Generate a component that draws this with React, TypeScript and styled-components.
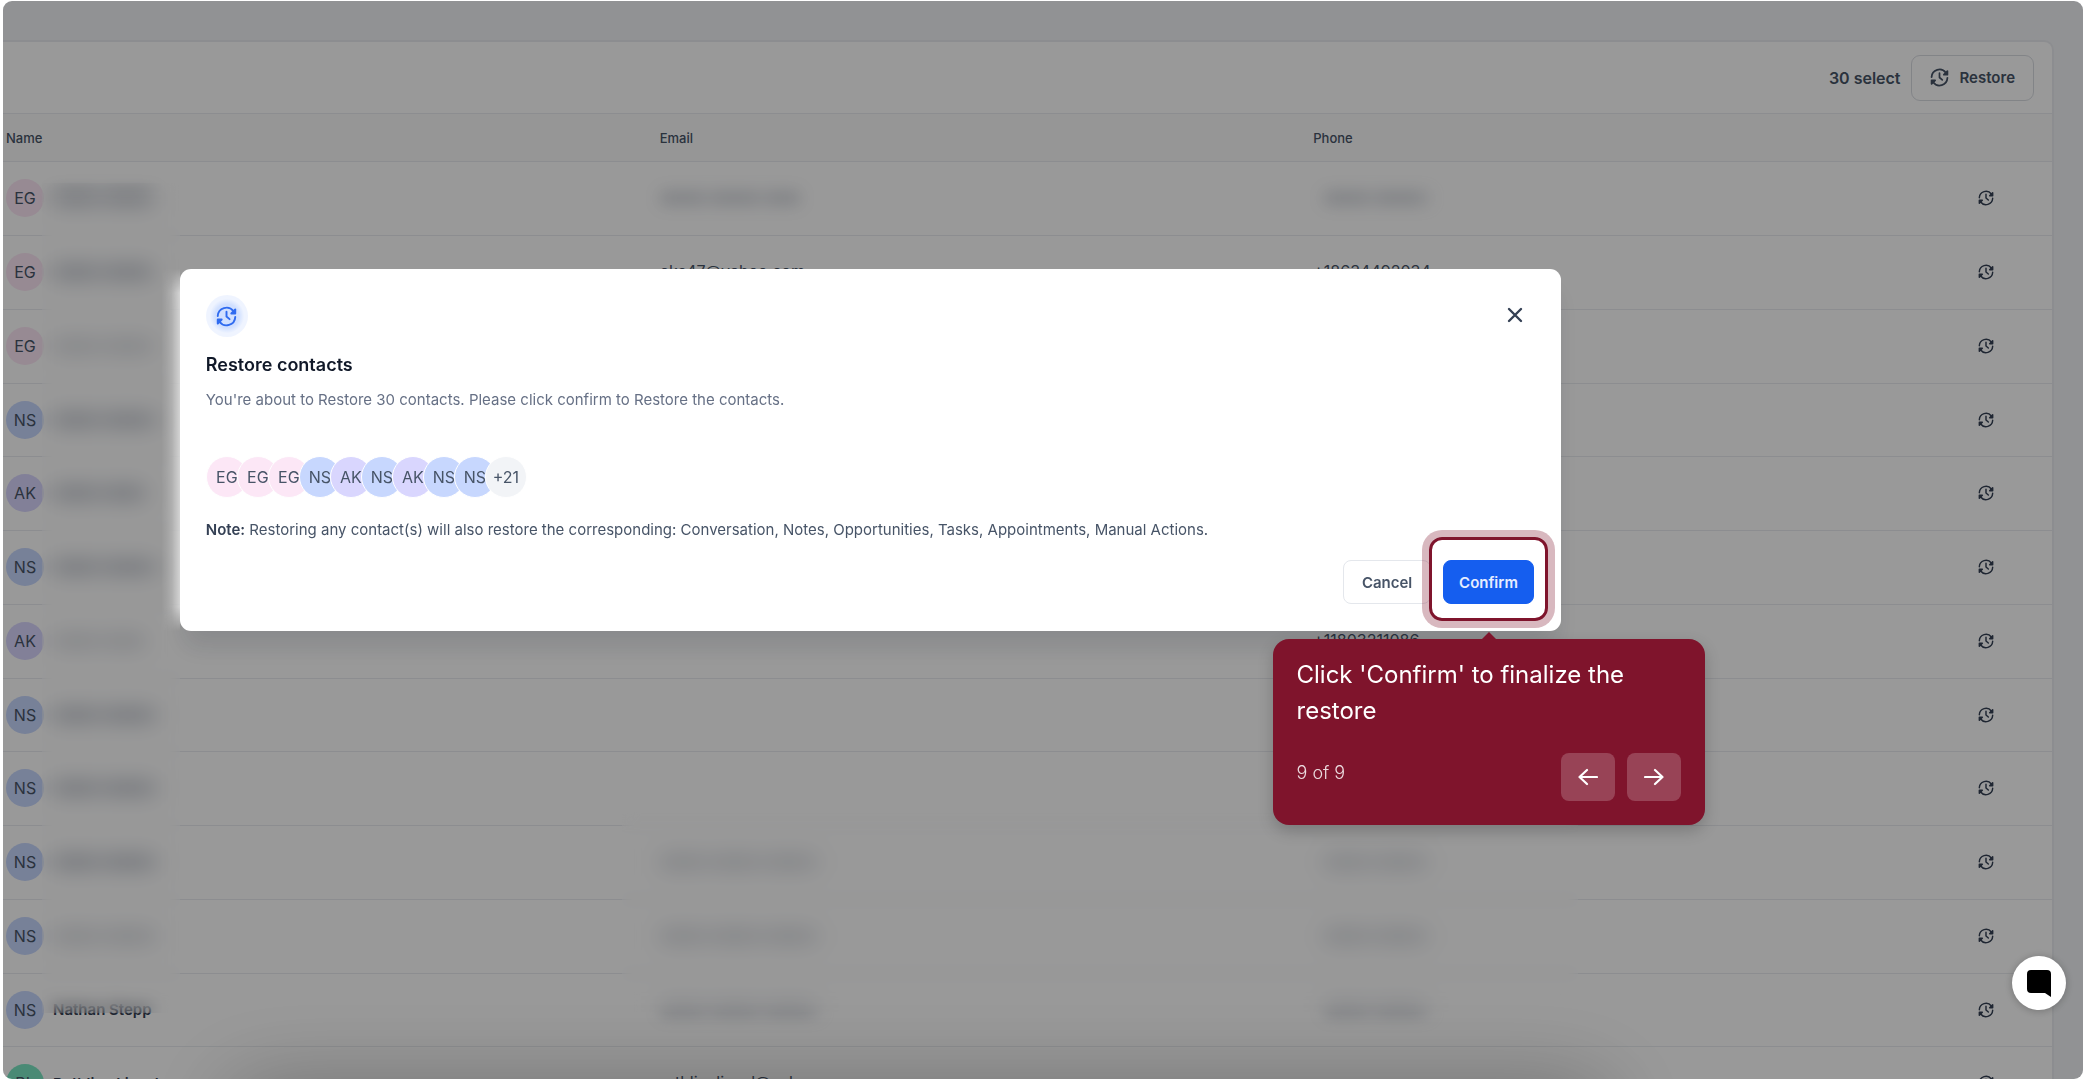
import React from "react";
import styled, { createGlobalStyle } from "styled-components";

const GlobalStyle = createGlobalStyle`
  * { box-sizing: border-box; }
  body {
    margin: 0;
    background: #fff;
    font-family: Inter, "Liberation Sans", sans-serif;
    overflow: hidden;
  }
  button { font: inherit; cursor: pointer; }
`;

const tones = { pink: "#fce7f6", blue: "#c7d7fe", purple: "#d9d6fe", green: "#7ce7c4", gray: "#f2f4f7" };
type Tone = keyof typeof tones;

const Frame = styled.div`
  position: relative;
  height: calc(100vh - 2px);
  margin: 1px 3px;
  padding-top: 41px;
  border-radius: 9px;
  overflow: hidden;
  background: #f2f4f7;
`;

const Card = styled.section`
  position: relative;
  margin-right: 31px;
  background: #fff;
  border-radius: 0 8px 0 0;
  box-shadow: 0 0 0 2px #eaecf0;
`;

const Toolbar = styled.header`
  display: flex;
  align-items: center;
  justify-content: flex-end;
  gap: 10px;
  height: 71px;
  padding-right: 18px;
  color: #475467;
  font-size: 16px;
  font-weight: 600;
`;

const OutlineButton = styled.button`
  display: flex;
  align-items: center;
  gap: 11px;
  height: 46px;
  padding: 0 18px;
  border: 1px solid #d9dce2;
  border-radius: 9px;
  background: transparent;
  color: #475467;
  font-size: 15px;
  font-weight: 600;
`;

const Table = styled.table`
  width: 100%;
  table-layout: fixed;
  border-collapse: collapse;
  color: #475467;
  font-size: 16px;
`;

const Column = styled.col<{ $width?: string }>`
  width: ${(p) => p.$width ?? "auto"};
`;

const HeadCell = styled.th`
  height: 48px;
  padding: 0 3px;
  border: 1px solid #eaecf0;
  border-width: 1px 0;
  background: #fafafa;
  font-size: 13px;
  font-weight: 500;
  text-align: left;
`;

const Row = styled.tr`
  height: 74px;
  border-bottom: 1px solid #eaecf0;
  &:nth-child(4n) { height: 73px; }
`;

const Cell = styled.td<{ $end?: boolean }>`
  padding: 0 ${(p) => (p.$end ? "58px" : "2px")} 4px 3px;
  text-align: ${(p) => (p.$end ? "right" : "left")};
  white-space: nowrap;
`;

const Person = styled.div`
  display: flex;
  align-items: center;
  gap: 9px;
  padding-top: 3px;
  color: #344054;
  font-size: 15px;
  font-weight: 600;
`;

const Avatar = styled.span<{ $tone: Tone }>`
  display: grid;
  place-items: center;
  flex: none;
  width: 38px;
  height: 38px;
  border-radius: 50%;
  background: ${(p) => tones[p.$tone]};
  color: #475467;
  font-size: 16px;
  font-weight: 400;
`;

const Smudge = styled.span<{ $width: number; $faint?: boolean; $indent?: boolean }>`
  display: inline-block;
  width: ${(p) => p.$width}px;
  height: 14px;
  margin-left: ${(p) => (p.$indent ? 11 : 0)}px;
  border-radius: 4px;
  background: repeating-linear-gradient(90deg, #667085 0 42px, #a4abb9 42px 54px);
  filter: blur(8px);
  opacity: ${(p) => (p.$faint ? 0.26 : 0.44)};
  vertical-align: middle;
`;

const IconButton = styled.button`
  display: inline-flex;
  padding: 0;
  border: 0;
  background: none;
  color: #344054;
  vertical-align: middle;
`;

/* Frosted strip that keeps private columns unreadable. */
const Frost = styled.div<{ $area: "names" | "details" }>`
  position: absolute;
  top: ${(p) => (p.$area === "names" ? 141 : 770)}px;
  left: ${(p) => (p.$area === "names" ? "39px" : "619px")};
  width: ${(p) => (p.$area === "names" ? "138px" : "956px")};
  height: ${(p) => (p.$area === "names" ? 830 : 200)}px;
  backdrop-filter: blur(8px);
`;

const Overlay = styled.div`
  position: absolute;
  inset: 0;
  display: flex;
  align-items: flex-start;
  padding: 268px 25.1% 0 8.5%;
  background: rgba(0, 0, 0, 0.4);
  overflow: hidden;

  &::before {
    content: "";
    position: absolute;
    left: 12%;
    right: 24%;
    bottom: -70px;
    height: 40px;
    box-shadow: 0 0 90px 20px rgba(0, 0, 0, 0.3);
  }
`;

const Dialog = styled.section`
  position: relative;
  flex: 1;
  min-height: 362px;
  padding: 26px 27px 25px 26px;
  border-radius: 11px;
  background: #fff;
  color: #475467;
  font-size: 15px;
  box-shadow: 0 20px 24px -4px rgba(16, 24, 40, 0.12);

  &::before {
    content: "";
    position: absolute;
    top: 0;
    bottom: 0;
    right: 100%;
    width: 18px;
    background: linear-gradient(90deg, transparent, rgba(255, 255, 255, 0.2) 50%, rgba(255, 255, 255, 0.6));
    mask-image: linear-gradient(transparent, #000 24px calc(100% - 24px), transparent);
  }
`;

const DialogTop = styled.div`
  display: flex;
  align-items: center;
  justify-content: space-between;
  padding-right: 8px;
`;

const Badge = styled.span`
  display: grid;
  place-items: center;
  width: 42px;
  height: 42px;
  border-radius: 50%;
  background: radial-gradient(circle, #d1e0ff 40%, #eff4ff 58%);
  color: #2f6bf0;
`;

const Title = styled.h2`
  margin: 16px 0 0;
  color: #101828;
  font-size: 18px;
  font-weight: 600;
  line-height: 24px;
`;

const Description = styled.p`
  margin: 12px 0 0;
  color: #667085;
  font-size: 15px;
  line-height: 22px;
`;

const Stack = styled.div`
  display: flex;
  margin-top: 45px;

  ${Avatar} {
    width: 42px;
    height: 42px;
    border: 1px solid #fff;
    margin-right: -11px;
  }
`;

const Note = styled.p`
  margin: 21px 0 0;
  font-size: 15px;
  line-height: 22px;
  strong { color: #344054; font-weight: 600; }
`;

const Actions = styled.footer`
  display: flex;
  justify-content: flex-end;
  gap: 12px;
  margin-top: 19px;
`;

const ActionButton = styled.button<{ $primary?: boolean }>`
  height: 44px;
  min-width: 88px;
  padding: 0 15px;
  border: 1px solid ${(p) => (p.$primary ? "#155eef" : "#e4e7ec")};
  border-radius: 8px;
  background: ${(p) => (p.$primary ? "#155eef" : "#fff")};
  color: ${(p) => (p.$primary ? "#e6edff" : "#475467")};
  font-size: 15px;
  font-weight: 600;
`;

const Spotlight = styled.div`
  position: relative;

  &::before {
    content: "";
    position: absolute;
    inset: -23px -14px -17px;
    border: 3px solid #7f142c;
    border-radius: 13px;
    box-shadow: 0 0 0 7px rgba(127, 20, 44, 0.3);
    pointer-events: none;
  }
`;

const Tour = styled.aside`
  position: absolute;
  top: 79px;
  left: 50%;
  width: 432px;
  padding: 18px 24px 24px;
  border-radius: 16px;
  transform: translateX(-50%);
  background: #7f142c;
  color: #fff;
  box-shadow: 0 6px 16px rgba(0, 0, 0, 0.2);

  &::before {
    content: "";
    position: absolute;
    bottom: 100%;
    left: 50%;
    border: 7px solid transparent;
    border-top-width: 0;
    border-bottom-color: #7f142c;
    transform: translateX(-50%);
  }
`;

const TourText = styled.p`
  margin: 0;
  font-size: 24px;
  line-height: 36px;
`;

const TourFooter = styled.div`
  display: flex;
  align-items: flex-start;
  gap: 12px;
  margin-top: 24px;
`;

const Progress = styled.span`
  flex: 1;
  color: rgba(255, 255, 255, 0.85);
  font-size: 18px;
  font-weight: 300;
  line-height: 40px;
`;

const TourButton = styled.button`
  display: grid;
  place-items: center;
  width: 54px;
  height: 48px;
  padding: 0;
  border: 0;
  border-radius: 8px;
  background: rgba(255, 255, 255, 0.2);
  color: #fff;
`;

const ChatButton = styled.button`
  position: absolute;
  right: 17px;
  bottom: 69px;
  display: grid;
  place-items: center;
  width: 54px;
  height: 54px;
  padding: 0;
  border: 0;
  border-radius: 50%;
  background: #fff;
  box-shadow: 0 1px 8px rgba(0, 0, 0, 0.25);
`;

const RestoreIcon = ({ size }: { size: number }) => (
  <svg width={size} height={size} viewBox="0 0 24 24" fill="none" stroke="currentColor" strokeWidth="2.2" strokeLinecap="round" strokeLinejoin="round" aria-hidden="true">
    <path d="M2 11.5A10 10 0 0 1 20 6" />
    <path d="M22 12.5A10 10 0 0 1 4 18" />
    <path d="M22 4V8.500H17.500z" fill="currentColor" />
    <path d="M2 20V15.500H6.500z" fill="currentColor" />
    <path d="M12 6.500V12l3.500 3" />
  </svg>
);

const Arrow = ({ back }: { back?: boolean }) => (
  <svg width="20" height="18" viewBox="0 0 20 18" fill="none" stroke="currentColor" strokeWidth="2.2" strokeLinecap="round" strokeLinejoin="round" aria-hidden="true">
    <path d={back ? "M19 9H1.500M9 2L1.500 9l7.500 7" : "M1 9h17.500M11 2L18.500 9 11 16"} />
  </svg>
);

interface Contact {
  initials: string;
  tone: Tone;
  name?: string;
  email?: string;
  phone?: string;
  smudge: number;
  faint?: boolean;
  details?: boolean;
}

const contacts: Contact[] = [
  { initials: "EG", tone: "pink", smudge: 102, details: true },
  { initials: "EG", tone: "pink", smudge: 102, email: "eks47@yahoo.com", phone: "+18634492034" },
  { initials: "EG", tone: "pink", smudge: 102, faint: true },
  { initials: "NS", tone: "blue", smudge: 106 },
  { initials: "AK", tone: "purple", smudge: 92 },
  { initials: "NS", tone: "blue", smudge: 106 },
  { initials: "AK", tone: "purple", smudge: 92, faint: true, phone: "+11803211086" },
  { initials: "NS", tone: "blue", smudge: 106 },
  { initials: "NS", tone: "blue", smudge: 106 },
  { initials: "NS", tone: "blue", smudge: 106, details: true },
  { initials: "NS", tone: "blue", smudge: 106, faint: true, details: true },
  { initials: "NS", tone: "blue", smudge: 106, name: "Nathan Stepp", details: true },
  { initials: "RL", tone: "green", smudge: 0, name: "Ruthline Linval", email: "ruthlinelinval@aol" },
];

const stack: [string, Tone][] = [
  ["EG", "pink"], ["EG", "pink"], ["EG", "pink"], ["NS", "blue"], ["AK", "purple"],
  ["NS", "blue"], ["AK", "purple"], ["NS", "blue"], ["NS", "blue"], ["+21", "gray"],
];

export default function App() {
  return (
    <>
      <GlobalStyle />
      <Frame>
        <Card>
          <Toolbar>
            <span>30 select</span>
            <OutlineButton>
              <RestoreIcon size={19} />
              Restore
            </OutlineButton>
          </Toolbar>
          <Table>
            <colgroup>
              <Column $width="31.9%" />
              <Column $width="31.9%" />
              <Column />
              <Column $width="90px" />
            </colgroup>
            <thead>
              <tr>
                <HeadCell>Name</HeadCell>
                <HeadCell>Email</HeadCell>
                <HeadCell>Phone</HeadCell>
                <HeadCell aria-label="Actions" />
              </tr>
            </thead>
            <tbody>
              {contacts.map((c, i) => (
                <Row key={i}>
                  <Cell>
                    <Person>
                      <Avatar $tone={c.tone}>{c.initials}</Avatar>
                      {c.name ?? <Smudge $width={c.smudge} $faint={c.faint} />}
                    </Person>
                  </Cell>
                  <Cell>{c.email ?? (c.details && <Smudge $width={i ? 160 : 140} $faint />)}</Cell>
                  <Cell>{c.phone ?? (c.details && <Smudge $width={106} $faint $indent />)}</Cell>
                  <Cell $end>
                    <IconButton aria-label="Restore contact">
                      <RestoreIcon size={16} />
                    </IconButton>
                  </Cell>
                </Row>
              ))}
            </tbody>
          </Table>
          <Frost $area="names" />
          <Frost $area="details" />
        </Card>

        <Overlay>
          <Dialog role="dialog" aria-labelledby="dialog-title">
            <DialogTop>
              <Badge><RestoreIcon size={21} /></Badge>
              <IconButton aria-label="Close">
                <svg width="22" height="22" viewBox="0 0 22 22" stroke="#344054" strokeWidth="2.400" strokeLinecap="round" aria-hidden="true">
                  <path d="M5 4l12 12M17 4L5 16" />
                </svg>
              </IconButton>
            </DialogTop>
            <Title id="dialog-title">Restore contacts</Title>
            <Description>You're about to Restore 30 contacts. Please click confirm to Restore the contacts.</Description>
            <Stack>
              {stack.map(([initials, tone], i) => (
                <Avatar key={i} $tone={tone}>{initials}</Avatar>
              ))}
            </Stack>
            <Note>
              <strong>Note:</strong> Restoring any contact(s) will also restore the corresponding: Conversation, Notes, Opportunities, Tasks, Appointments, Manual Actions.
            </Note>
            <Actions>
              <ActionButton>Cancel</ActionButton>
              <Spotlight>
                <ActionButton $primary>Confirm</ActionButton>
                <Tour>
                  <TourText>Click 'Confirm' to finalize the restore</TourText>
                  <TourFooter>
                    <Progress>9 of 9</Progress>
                    <TourButton aria-label="Previous step"><Arrow back /></TourButton>
                    <TourButton aria-label="Next step"><Arrow /></TourButton>
                  </TourFooter>
                </Tour>
              </Spotlight>
            </Actions>
          </Dialog>
        </Overlay>

        <ChatButton aria-label="Open chat">
          <svg width="24" height="27" viewBox="0 0 24 27" aria-hidden="true">
            <path d="M4 0h16a4 4 0 0 1 4 4v23l-6-4H4a4 4 0 0 1-4-4V4a4 4 0 0 1 4-4z" />
          </svg>
        </ChatButton>
      </Frame>
    </>
  );
}
